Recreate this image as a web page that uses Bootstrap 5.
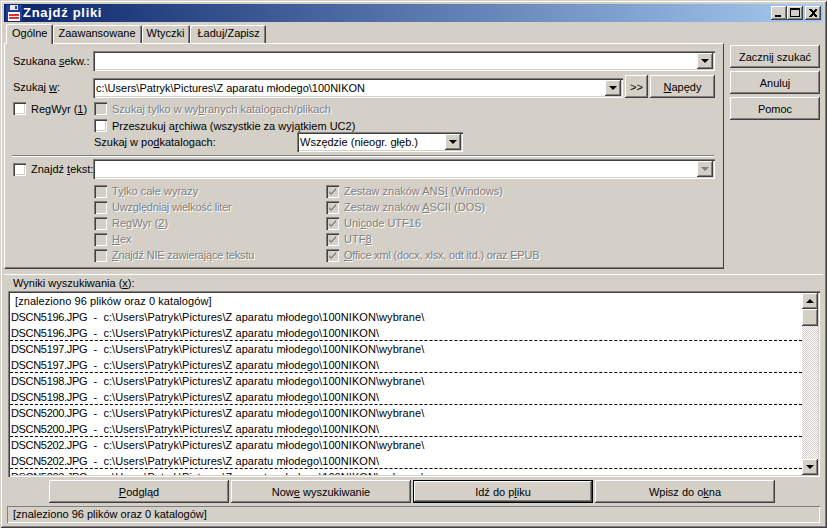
<!DOCTYPE html>
<html lang="pl">
<head>
    <meta charset="UTF-8">
    <title>Znajdź pliki</title>
    <link href="https://cdn.jsdelivr.net/npm/bootstrap@5.3.3/dist/css/bootstrap.min.css" rel="stylesheet">
    <style>
        html, body { margin: 0; height: 100%; background: #d4d0c8; overflow: hidden; }
        body { font: 11px/14px "Liberation Sans", Arial, sans-serif; color: #000; }
        u { text-underline-offset: 1px; }

        .win-frame { width: 827px; height: 528px; padding: 4px; background: #d4d0c8;
            box-shadow: inset 1px 1px 0 #d4d0c8, inset -1px -1px 0 #404040, inset 2px 2px 0 #fff, inset -2px -2px 0 #808080; }

        /* title bar */
        .win-title { height: 18px; background: linear-gradient(90deg, #0a246a, #a6caf0); color: #fff; font-weight: 700; font-size: 13px; letter-spacing: .7px; padding: 0 2px; }
        .win-title > svg { margin-right: 1px; }
        .win-cap { width: 16px; height: 14px; background: #d4d0c8; box-shadow: inset -1px -1px 0 #404040, inset 1px 1px 0 #fff, inset -2px -2px 0 #808080; }
        .win-cap svg { display: block; }
        .win-cap-close { margin-left: 2px; }

        /* upper part */
        .win-top { height: 247px; }
        .win-left { width: 720px; }
        .win-side { width: 96px; padding: 23px 0 0 6px; gap: 3px; }

        .win-tabs.nav-tabs { height: 21px; border: 0; padding-left: 2px; align-items: flex-end; flex-wrap: nowrap; }
        .win-tabs .nav-link { height: 18px; padding: 1px 6px 0 5px; margin: 0; border: 0; border-radius: 2px 2px 0 0; color: #000; background: #d4d0c8; font-size: 11px; line-height: 15px;
            box-shadow: inset 1px 1px 0 #fff, inset -1px 0 0 #404040, inset -2px 0 0 #808080; }
        .win-tabs .nav-link.active { height: 20px; padding: 2px 6px 0 6px; margin-bottom: -1px; position: relative; z-index: 1; background: #d4d0c8; color: #000; }
        .win-tabs .nav-item:last-child .nav-link { padding-left: 7px; }

        .win-page { height: 226px; padding: 7px 8px 0 8px; border-top: 1px solid #fff; border-left: 1px solid #fff; border-right: 1px solid #404040; border-bottom: 1px solid #404040; box-shadow: inset 0 -1px 0 #808080; }
        .win-lbl { width: 80px; flex: none; }
        .win-field-row { height: 20px; }
        .win-row2 { height: 23px; margin-top: 4px; }

        .win-combo { height: 20px; padding: 2px 2px 2px 3px; background: #fff; box-shadow: inset 1px 1px 0 #808080, inset 2px 2px 0 #404040, inset -1px -1px 0 #fff, inset -2px -2px 0 #d4d0c8; }
        .win-combo-val { white-space: nowrap; overflow: hidden; line-height: 16px; }
        .win-drop { width: 16px; height: 16px; flex: none; background: #d4d0c8; box-shadow: inset -1px -1px 0 #404040, inset 1px 1px 0 #fff, inset -2px -2px 0 #808080; }
        .win-arrow { width: 0; height: 0; border-left: 4px solid transparent; border-right: 4px solid transparent; border-top: 4px solid #000; }
        .win-drop.win-off .win-arrow { border-top-color: #808080; }

        .btn.win-btn { --bs-btn-padding-x: 0; --bs-btn-padding-y: 0; --bs-btn-font-size: 11px; --bs-btn-line-height: 14px; --bs-btn-color: #000; --bs-btn-bg: #d4d0c8; --bs-btn-border-width: 0; --bs-btn-border-radius: 0; --bs-btn-hover-bg: #d4d0c8;
            height: 23px; background: #d4d0c8; box-shadow: inset -1px -1px 0 #404040, inset 1px 1px 0 #fff, inset -2px -2px 0 #808080; }
        .btn.win-btn-focus { box-shadow: inset 0 0 0 1px #000, inset -2px -2px 0 #404040, inset 2px 2px 0 #fff, inset -3px -3px 0 #808080; }
        .win-go { height: 22px; }
        .win-gap2 { margin-left: 2px; flex: none; }
        .win-more { width: 23px; }
        .win-drives { width: 65px; }

        .win-box { width: 13px; height: 13px; flex: none; background: #fff; box-shadow: inset 1px 1px 0 #808080, inset 2px 2px 0 #404040, inset -1px -1px 0 #fff, inset -2px -2px 0 #d4d0c8; }
        .win-off .win-box { background: #d4d0c8; }
        .win-box svg { display: block; }
        .win-chk { height: 13px; gap: 5px; white-space: nowrap; }
        .win-chk.win-off { color: #808080; text-shadow: 1px 1px 0 #fff; }
        .win-narrow { letter-spacing: -.2px; }

        .win-regex-col { width: 81px; flex: none; }
        .win-subrow { height: 20px; }
        .win-subrow-lbl { width: 203px; }
        .win-select { width: 166px; }
        .win-sep { height: 2px; margin: 3px 1px 0 -1px; background: #808080; border-bottom: 1px solid #fff; }
        .win-field-tight { margin-top: 2px; }
        .win-opts { margin: 4px 0 0 81px; }
        .win-opts .win-chk { height: 16px; }
        .win-opt-col { width: 232px; flex: none; }

        /* splitter and results */
        .win-split { height: 6px; flex: none; border-bottom: 1px solid #fff; }
        .win-res-lbl { height: 16px; flex: none; padding: 1px 0 0 9px; }
        .win-list { height: 186px; flex: none; margin: 0 3px 0 4px; padding: 2px; background: #fff; box-shadow: inset 1px 1px 0 #808080, inset 2px 2px 0 #404040, inset -1px -1px 0 #fff, inset -2px -2px 0 #d4d0c8; }
        .win-results { overflow: hidden; height: 182px; flex-wrap: nowrap; border-radius: 0; }
        .win-results .list-group-item { height: 16px; flex: none; padding: 0 0 0 1px; border: 0; border-radius: 0; line-height: 16px; white-space: pre; color: #000; background: transparent; letter-spacing: .07px; }
        .win-results .win-div { border-bottom: 1px dashed #000; }
        .win-results .win-head { padding-left: 5px; }
        .win-fname { letter-spacing: -.33px; }
        .win-scroll { width: 16px; flex: none; }
        .win-sb-btn { height: 16px; flex: none; background: #d4d0c8; box-shadow: inset -1px -1px 0 #404040, inset 1px 1px 0 #fff, inset -2px -2px 0 #808080; }
        .win-sb-thumb { height: 17px; }
        .win-sb-track { background: repeating-conic-gradient(#fff 0 25%, #d4d0c8 0 50%) 0 0 / 2px 2px; }
        .win-arrow.win-up { border-top: 0; border-bottom: 4px solid #000; }

        .win-actions { margin: 3px 0 0 45px; gap: 2px; flex: none; }
        .win-actions .btn { width: 180px; }
        .win-status { height: 17px; flex: none; margin: 3px 3px 0 3px; padding: 1px 0 0 6px; box-shadow: inset 1px 1px 0 #808080, inset -1px -1px 0 #fff; }
    </style>
</head>
<body>
    <div class="win-frame d-flex flex-column">
        <!-- title bar -->
        <div class="win-title d-flex align-items-center flex-shrink-0">
            <svg width="16" height="16" viewBox="0 0 16 16" shape-rendering="crispEdges">
                <rect x="0" y="0" width="16" height="16" fill="#1f3f9f"/>
                <rect x="4" y="0" width="8" height="5" fill="#e8e8f0"/>
                <rect x="9" y="1" width="2" height="3" fill="#1f3f9f"/>
                <rect x="2" y="7" width="12" height="9" fill="#fff"/>
                <rect x="3" y="9" width="10" height="2" fill="#e03030"/>
                <rect x="3" y="12" width="10" height="2" fill="#e03030"/>
            </svg>
            <span>Znajdź pliki</span>
            <div class="d-flex ms-auto">
                <div class="win-cap"><svg width="16" height="14" shape-rendering="crispEdges"><rect x="4" y="9" width="6" height="2" fill="#000"/></svg></div>
                <div class="win-cap"><svg width="16" height="14" shape-rendering="crispEdges"><path d="M3 2h10v9H3z M4 4v6h8V4z" fill="#000" fill-rule="evenodd"/></svg></div>
                <div class="win-cap win-cap-close"><svg width="16" height="14" shape-rendering="crispEdges"><path d="M4 3h2l2 2 2-2h2v1l-3 3 3 3v1h-2L8 9l-2 2H4v-1l3-3-3-3z" fill="#000"/></svg></div>
            </div>
        </div>

        <div class="win-top d-flex flex-shrink-0">
            <div class="win-left d-flex flex-column">
                <ul class="nav nav-tabs win-tabs">
                    <li class="nav-item"><a class="nav-link active" href="#">Ogólne</a></li>
                    <li class="nav-item"><a class="nav-link" href="#">Zaawansowane</a></li>
                    <li class="nav-item"><a class="nav-link" href="#">Wtyczki</a></li>
                    <li class="nav-item"><a class="nav-link" href="#">Ładuj/Zapisz</a></li>
                </ul>
                <div class="win-page">
                    <div class="d-flex align-items-center win-field-row">
                        <span class="win-lbl">Szukana <u>s</u>ekw.:</span>
                        <div class="win-combo d-flex flex-grow-1">
                            <div class="win-combo-val flex-grow-1"></div>
                            <div class="win-drop d-flex align-items-center justify-content-center"><div class="win-arrow"></div></div>
                        </div>
                    </div>
                    <div class="d-flex align-items-end win-row2">
                        <span class="win-lbl align-self-center">Szukaj <u>w</u>:</span>
                        <div class="win-combo d-flex flex-grow-1">
                            <div class="win-combo-val flex-grow-1">c:\Users\Patryk\Pictures\Z aparatu młodego\100NIKON</div>
                            <div class="win-drop d-flex align-items-center justify-content-center"><div class="win-arrow"></div></div>
                        </div>
                        <button class="btn win-btn win-gap2 win-more">&gt;&gt;</button>
                        <button class="btn win-btn win-gap2 win-drives"><u>N</u>apędy</button>
                    </div>
                    <div class="d-flex mt-1">
                        <div class="win-regex-col">
                            <div class="win-chk d-flex align-items-center"><span class="win-box"></span><span>RegWyr (<u>1</u>)</span></div>
                        </div>
                        <div class="flex-grow-1">
                            <div class="win-chk win-off d-flex align-items-center"><span class="win-box"></span><span>Szukaj tylko w wy<u>b</u>ranych katalogach/plikach</span></div>
                            <div class="win-chk d-flex align-items-center mt-1"><span class="win-box"></span><span>Przeszukuj a<u>r</u>chiwa (wszystkie za wyjątkiem UC2)</span></div>
                            <div class="d-flex align-items-center win-subrow">
                                <span class="win-subrow-lbl">Szukaj w po<u>d</u>katalogach:</span>
                                <div class="win-combo win-select d-flex">
                                    <div class="win-combo-val flex-grow-1">Wszędzie (nieogr. głęb.)</div>
                                    <div class="win-drop d-flex align-items-center justify-content-center"><div class="win-arrow"></div></div>
                                </div>
                            </div>
                        </div>
                    </div>
                    <div class="win-sep"></div>
                    <div class="d-flex align-items-center win-field-row win-field-tight">
                        <div class="win-chk d-flex align-items-center win-lbl"><span class="win-box"></span><span>Znajdź <u>t</u>ekst:</span></div>
                        <div class="win-combo d-flex flex-grow-1">
                            <div class="win-combo-val flex-grow-1"></div>
                            <div class="win-drop win-off d-flex align-items-center justify-content-center"><div class="win-arrow"></div></div>
                        </div>
                    </div>
                    <div class="d-flex win-opts">
                        <div class="win-opt-col">
                            <div class="win-chk win-off d-flex align-items-center"><span class="win-box"></span><span>T<u>y</u>lko całe wyrazy</span></div>
                            <div class="win-chk win-off d-flex align-items-center"><span class="win-box"></span><span class="win-narrow">Uwzględniaj wielkość liter</span></div>
                            <div class="win-chk win-off d-flex align-items-center"><span class="win-box"></span><span>RegWyr (<u>2</u>)</span></div>
                            <div class="win-chk win-off d-flex align-items-center"><span class="win-box"></span><span><u>H</u>ex</span></div>
                            <div class="win-chk win-off d-flex align-items-center"><span class="win-box"></span><span class="win-narrow"><u>Z</u>najdź NIE zawierające tekstu</span></div>
                        </div>
                        <div>
                            <div class="win-chk win-off d-flex align-items-center"><span class="win-box"><svg width="13" height="13"><path d="M3 6l2 2 5-5v2l-5 5-2-2z" fill="#808080"/></svg></span><span>Zestaw znaków ANS<u>I</u> (Windows)</span></div>
                            <div class="win-chk win-off d-flex align-items-center"><span class="win-box"><svg width="13" height="13"><path d="M3 6l2 2 5-5v2l-5 5-2-2z" fill="#808080"/></svg></span><span>Zestaw znaków <u>A</u>SCII (DOS)</span></div>
                            <div class="win-chk win-off d-flex align-items-center"><span class="win-box"><svg width="13" height="13"><path d="M3 6l2 2 5-5v2l-5 5-2-2z" fill="#808080"/></svg></span><span>Uni<u>c</u>ode UTF16</span></div>
                            <div class="win-chk win-off d-flex align-items-center"><span class="win-box"><svg width="13" height="13"><path d="M3 6l2 2 5-5v2l-5 5-2-2z" fill="#808080"/></svg></span><span>UTF<u>8</u></span></div>
                            <div class="win-chk win-off d-flex align-items-center"><span class="win-box"><svg width="13" height="13"><path d="M3 6l2 2 5-5v2l-5 5-2-2z" fill="#808080"/></svg></span><span class="win-narrow"><u>O</u>ffice xml (docx, xlsx, odt itd.) oraz EPUB</span></div>
                        </div>
                    </div>
                </div>
            </div>
            <div class="win-side d-flex flex-column">
                <button class="btn win-btn w-100">Zacznij szukać</button>
                <button class="btn win-btn w-100">Anuluj</button>
                <button class="btn win-btn w-100">Pomoc</button>
            </div>
        </div>

        <div class="win-split"></div>
        <div class="win-res-lbl">Wyniki wyszukiwania (<u>x</u>):</div>
        <div class="win-list d-flex">
            <div class="flex-grow-1 win-results list-group" id="results"></div>
            <div class="win-scroll d-flex flex-column">
                <div class="win-sb-btn d-flex align-items-center justify-content-center"><div class="win-arrow win-up"></div></div>
                <div class="win-sb-btn win-sb-thumb"></div>
                <div class="win-sb-track flex-grow-1"></div>
                <div class="win-sb-btn d-flex align-items-center justify-content-center"><div class="win-arrow"></div></div>
            </div>
        </div>
        <div class="d-flex win-actions">
            <button class="btn win-btn win-go"><u>P</u>odgląd</button>
            <button class="btn win-btn win-go">Now<u>e</u> wyszukiwanie</button>
            <button class="btn win-btn win-go win-btn-focus">Idź do p<u>l</u>iku</button>
            <button class="btn win-btn win-go">Wpisz do o<u>k</u>na</button>
        </div>
        <div class="win-status">[znaleziono 96 plików oraz 0 katalogów]</div>
    </div>
    <script src="https://cdn.jsdelivr.net/npm/bootstrap@5.3.3/dist/js/bootstrap.bundle.min.js"></script>
    <script>
        // fill the result list, each file appears twice, the last visible row is cut by the list edge
        const files = ['5196', '5197', '5198', '5200', '5202'];
        const base = 'c:\\Users\\Patryk\\Pictures\\Z aparatu młodego\\100NIKON\\';
        const list = document.getElementById('results');
        let html = '<div class="list-group-item win-head">[znaleziono 96 plików oraz 0 katalogów]</div>';
        files.forEach(n => {
            const name = `<span class="win-fname">DSCN${n}.JPG</span>`;
            html += `<div class="list-group-item">${name}  -  ${base}wybrane\\</div>`;
            html += `<div class="list-group-item win-div">${name}  -  ${base}</div>`;
        });
        html += `<div class="list-group-item"><span class="win-fname">DSCN5203.JPG</span>  -  ${base}wybrane\\</div>`;
        list.innerHTML = html;
    </script>
</body>
</html>
